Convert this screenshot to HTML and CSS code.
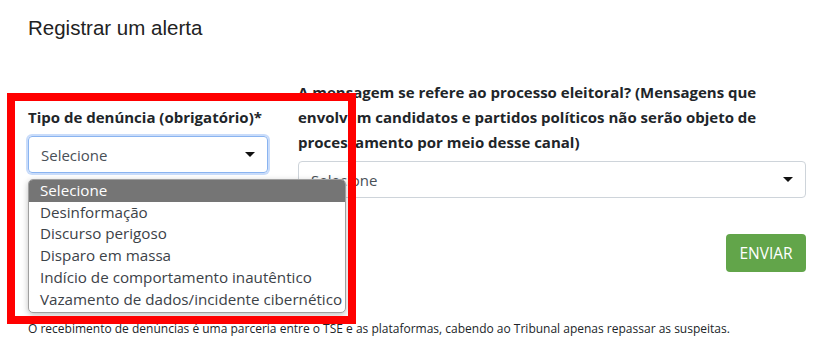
FILE: index.html
```html
<!DOCTYPE html>
<html lang="pt-BR">
<head>
    <meta charset="UTF-8">
    <meta name="viewport" content="width=device-width, initial-scale=1.0">
    <title>Registrar um alerta</title>
    <link rel="stylesheet" href="styles.css">
</head>
<body>
    <div class="page">
        <h1 class="title">Registrar um alerta</h1>

        <div class="form-row">
            <div class="field field-type">
                <label class="field-label">Tipo de denúncia (obrigatório)*</label>
                <div class="select select-focus">
                    <span>Selecione</span>
                    <span class="caret"></span>
                </div>
                <ul class="dropdown">
                    <li class="active">Selecione</li>
                    <li>Desinformação</li>
                    <li>Discurso perigoso</li>
                    <li>Disparo em massa</li>
                    <li>Indício de comportamento inautêntico</li>
                    <li>Vazamento de dados/incidente cibernético</li>
                </ul>
            </div>
            <div class="field field-wide">
                <label class="field-label">A mensagem se refere ao processo eleitoral? (Mensagens que envolvam candidatos e partidos políticos não serão objeto de processamento por meio desse canal)</label>
                <div class="select">
                    <span>Selecione</span>
                    <span class="caret"></span>
                </div>
            </div>
        </div>

        <div class="actions">
            <button class="btn-send">ENVIAR</button>
        </div>

        <p class="note">O recebimento de denúncias é uma parceria entre o TSE e as plataformas, cabendo ao Tribunal apenas repassar as suspeitas.</p>

        <div class="highlight-box"></div>
    </div>
</body>
</html>
```

FILE: styles.css
```css
body {
    margin: 0;
    font-family: "Open Sans", "Noto Sans", sans-serif;
    color: #212529;
    background: #fff;
}
.page {
    position: relative;
    padding: 14px 26px 0 28px;
}
.title {
    margin: 0;
    font-family: "Liberation Sans", Arial, sans-serif;
    font-weight: normal;
    font-size: 20.5px;
    line-height: 28px;
    color: #222;
}
.form-row {
    display: flex;
    align-items: center;
    gap: 30px;
    margin-top: 38px;
}
.field {
    position: relative;
}
.field-type {
    width: 240px;
    flex: none;
}
.field-wide {
    flex: 1;
}
.field-label {
    display: block;
    font-weight: 700;
    font-size: 15px;
    line-height: 25px;
    margin-bottom: 6px;
    color: #212529;
}
.select {
    height: 35px;
    border: 1px solid #ced4da;
    border-radius: 4px;
    display: flex;
    align-items: center;
    justify-content: space-between;
    padding: 0 12px;
    font-size: 15px;
    color: #495057;
}
.select-focus {
    border-color: #8ab4f0;
    box-shadow: 0 0 0 2px #c9dcfa;
}
.caret {
    width: 0;
    height: 0;
    border-left: 5px solid transparent;
    border-right: 5px solid transparent;
    border-top: 5px solid #111;
}
.dropdown {
    position: absolute;
    top: 100%;
    left: 0;
    width: 316px;
    margin: 6px 0 0;
    padding: 0 0 2px;
    list-style: none;
    background: #fff;
    border: 1px solid #a0a0a0;
    border-radius: 5px;
    box-shadow: 0 2px 6px rgba(0, 0, 0, 0.25);
    overflow: hidden;
    z-index: 2;
}
.dropdown li {
    padding: 0 11px;
    font-size: 15.2px;
    line-height: 21.7px;
    color: #3c4248;
    white-space: nowrap;
}
.dropdown li.active {
    background: #757575;
    color: #fff;
}
.actions {
    display: flex;
    justify-content: flex-end;
    margin-top: 36px;
}
.btn-send {
    width: 80px;
    height: 38px;
    border: none;
    border-radius: 4px;
    background: #62a54a;
    color: #fff;
    font-family: "Open Sans", "Noto Sans", sans-serif;
    font-size: 15.5px;
}
.note {
    margin: 48px 0 0;
    font-size: 12px;
    color: #212529;
}
.highlight-box {
    position: absolute;
    left: 7px;
    top: 93px;
    width: 333px;
    height: 215px;
    border: 8px solid #ff0000;
    z-index: 3;
}
```
